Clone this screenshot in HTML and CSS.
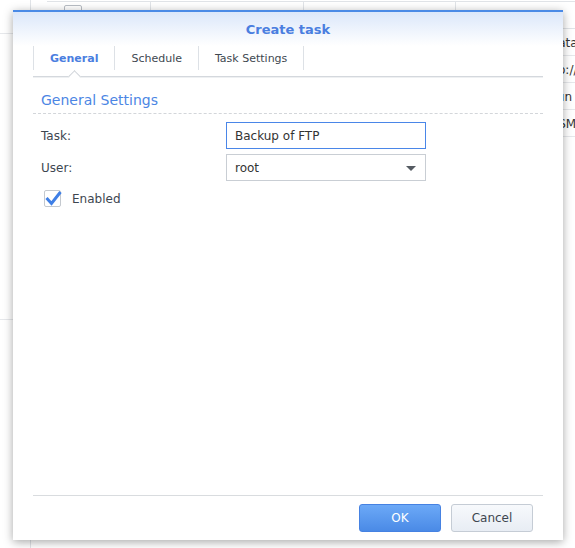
FILE: index.html
```html
<!DOCTYPE html>
<html lang="en">
<head>
    <meta charset="UTF-8">
    <meta name="viewport" content="width=device-width, initial-scale=1.0">
    <title>Create task</title>
    <link rel="stylesheet" href="styles.css">
</head>
<body>
    <div class="desk">
        <aside class="side">
            <div class="side-item first"></div>
            <div class="side-item second"></div>
        </aside>
        <main class="grid">
            <div class="grid-head">
                <div class="cell c1"><span class="edit-ico"></span></div>
                <div class="cell c2"></div>
                <div class="cell c3"></div>
                <div class="cell c4"></div>
            </div>
            <div class="grid-row"><span class="row-text">Data</span></div>
            <div class="grid-row"><span class="row-text">ftp://</span></div>
            <div class="grid-row"><span class="row-text">Run a</span></div>
            <div class="grid-row"><span class="row-text">DSM</span></div>
        </main>
    </div>

    <div class="dialog">
        <div class="dlg-head">Create task</div>
        <div class="tabs">
            <div class="tab active">General</div>
            <div class="tab">Schedule</div>
            <div class="tab">Task Settings</div>
        </div>
        <div class="dlg-body">
            <div class="section-title">General Settings</div>
            <div class="form">
                <label class="label">Task:</label>
                <input class="field focused" type="text" value="Backup of FTP">
                <label class="label">User:</label>
                <div class="field select">
                    <span>root</span>
                    <span class="arrow"></span>
                </div>
            </div>
            <div class="check-row">
                <span class="checkbox">
                    <svg class="check" width="20" height="18" viewBox="0 0 20 18">
                        <path d="M2.5 8 L7.5 13.5 L16.5 2" fill="none" stroke="#3f7fe6" stroke-width="3"/>
                    </svg>
                </span>
                <span class="check-label">Enabled</span>
            </div>
        </div>
        <div class="footer">
            <button class="btn primary">OK</button>
            <button class="btn">Cancel</button>
        </div>
    </div>
</body>
</html>
```

FILE: styles.css
```css
body {
    margin: 0;
    font-family: "DejaVu Sans", Verdana, sans-serif;
    background-color: #fff;
    color: #3d4650;
    overflow: hidden;
}

/* page behind the dialog */
.desk {
    display: flex;
    height: 548px;
    overflow: hidden;
}

.side {
    flex-shrink: 0;
    width: 30px;
    border-right: 1px solid #e1e4e8;
}

.side-item.first {
    height: 33px;
    border-bottom: 1px solid #e6e8eb;
}

.side-item.second {
    height: 285px;
    border-bottom: 1px solid #e6e8eb;
}

.grid {
    flex: 1;
    min-width: 0;
    margin-left: 16px;
    padding-top: 1px;
}

.grid-head {
    display: flex;
    height: 26px;
    border-top: 1px solid #e1e4e8;
    border-bottom: 1px solid #e1e4e8;
}

.cell {
    flex-shrink: 0;
    border-right: 1px solid #e1e4e8;
    box-sizing: border-box;
}

.c1 { width: 104px; padding: 3px 0 0 17px; }
.c2 { width: 153px; }
.c3 { width: 152px; }
.c4 { flex: 1; border-right: none; }

.edit-ico {
    display: block;
    width: 16px;
    height: 14px;
    border: 1px solid #b9bec5;
    border-radius: 2px;
}

.grid-row {
    height: 26px;
    border-bottom: 1px solid #e6e8eb;
    padding-left: 502px;
    font-size: 12px;
    line-height: 28px;
    color: #333;
    white-space: nowrap;
}

/* dialog */
.dialog {
    position: absolute;
    left: 13px;
    top: 10px;
    width: 550px;
    height: 530px;
    box-sizing: border-box;
    background-color: #fff;
    border-top: 2px solid #4a8ae6;
    box-shadow: 0 2px 9px rgba(0, 0, 0, 0.35);
    display: flex;
    flex-direction: column;
}

.dlg-head {
    height: 34px;
    background: linear-gradient(#dbe7fa, #ffffff);
    display: flex;
    align-items: center;
    justify-content: center;
    font-size: 13px;
    font-weight: bold;
    color: #4a7ee0;
}

.tabs {
    display: flex;
    height: 30px;
    margin: 0 20px;
    border-bottom: 1px solid #d4d8dd;
    box-shadow: 0 1px 0 #eef0f2;
}

.tab {
    position: relative;
    height: 24px;
    line-height: 26px;
    padding: 0 16px;
    border-left: 1px solid #dde1e6;
    font-size: 11px;
    color: #404850;
}

.tab:last-child {
    border-right: 1px solid #dde1e6;
}

.tab.active {
    color: #4a7ee0;
    font-weight: bold;
}

.tab.active::after {
    content: "";
    position: absolute;
    left: 50%;
    top: 26px;
    width: 8px;
    height: 8px;
    margin-left: -4px;
    background-color: #fff;
    border-top: 1px solid #d0d4d9;
    border-left: 1px solid #d0d4d9;
    transform: rotate(45deg);
}

.dlg-body {
    flex: 1;
    padding: 0 20px;
}

.section-title {
    margin-top: 13px;
    padding: 0 8px 3px;
    font-size: 14px;
    line-height: 20px;
    color: #4c86e4;
    border-bottom: 1px dashed #d3d6da;
}

.form {
    display: grid;
    grid-template-columns: 185px 200px;
    row-gap: 5px;
    align-items: center;
    padding: 8px 8px 0;
}

.label {
    font-size: 12px;
}

.field {
    height: 27px;
    box-sizing: border-box;
    border: 1px solid #c9ced4;
    padding: 0 8px;
    font-family: "DejaVu Sans", Verdana, sans-serif;
    font-size: 12px;
    color: #333;
    background-color: #fff;
    outline: none;
}

.field.focused {
    border-color: #4a86e8;
}

.select {
    display: flex;
    align-items: center;
    justify-content: space-between;
    padding-right: 9px;
}

.arrow {
    width: 0;
    height: 0;
    border-left: 5px solid transparent;
    border-right: 5px solid transparent;
    border-top: 5px solid #555b62;
    margin-top: 2px;
}

.check-row {
    display: flex;
    align-items: center;
    margin-top: 9px;
    padding-left: 11px;
}

.checkbox {
    position: relative;
    width: 15px;
    height: 15px;
    border: 1px solid #c4c9cf;
    border-radius: 2px;
}

.check {
    position: absolute;
    left: -1px;
    top: -1px;
}

.check-label {
    margin-left: 11px;
    font-size: 12px;
}

.footer {
    display: flex;
    justify-content: flex-end;
    gap: 10px;
    margin: 0 20px;
    padding: 8px 10px 8px 0;
    border-top: 1px solid #d9dcdf;
}

.btn {
    width: 82px;
    height: 28px;
    border-radius: 3px;
    border: 1px solid #c5ccd5;
    background: linear-gradient(#f7f9fc, #e8edf4);
    font-family: "DejaVu Sans", Verdana, sans-serif;
    font-size: 12px;
    color: #3d4650;
}

.btn.primary {
    border-color: #4682e2;
    background: linear-gradient(#6ca9f7, #4a8ae6);
    color: #fff;
}
```
